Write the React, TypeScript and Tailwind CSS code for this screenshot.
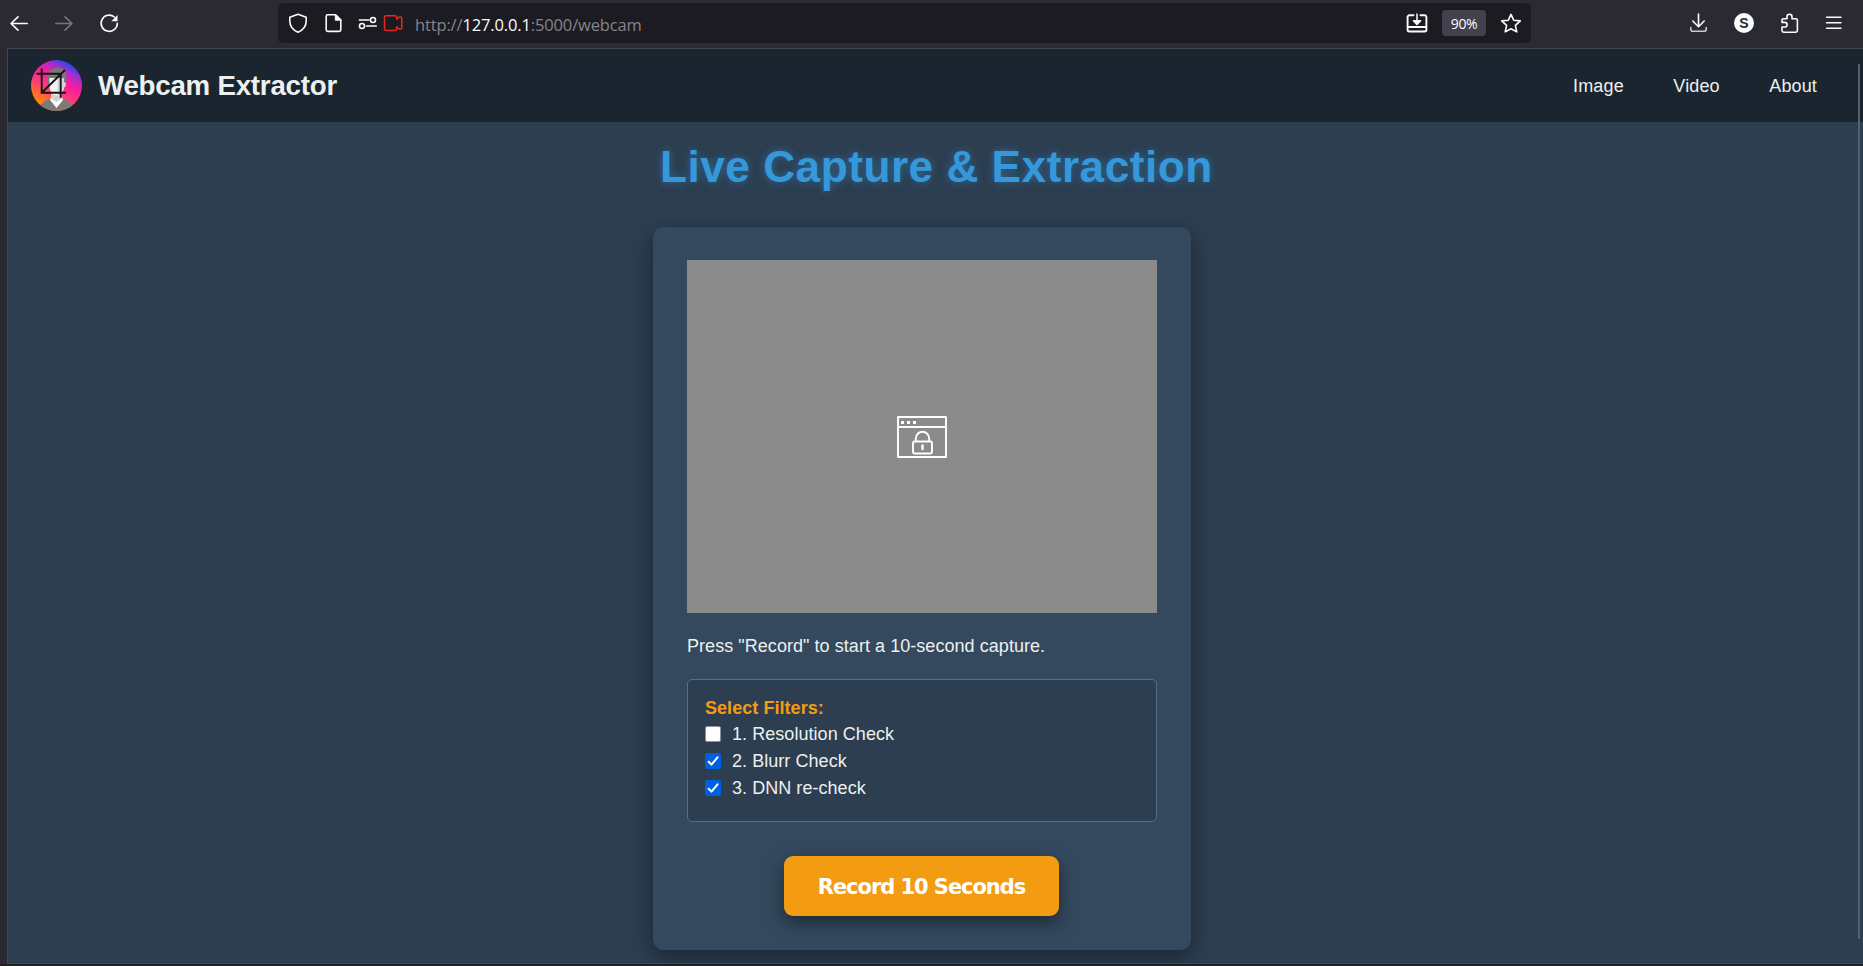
import type { ReactNode } from "react";

type IconProps = { w: number; h?: number; className?: string; children: ReactNode };

function Icon({ w, h = 20, className = "", children }: IconProps) {
  return (
    <svg
      width={w}
      height={h}
      viewBox={`0 0 ${w} ${h}`}
      fill="none"
      stroke="currentColor"
      strokeWidth={1.6}
      strokeLinecap="round"
      strokeLinejoin="round"
      className={`shrink-0 ${className}`}
    >
      {children}
    </svg>
  );
}

function Toolbar() {
  return (
    <div className="flex h-12 shrink-0 items-start bg-[#2b2a33] text-[#fbfbfe]">
      <div className="flex w-[278px] shrink-0 gap-[25px] pt-[13px] pl-[9px]">
        <Icon w={20}>
          <path d="M18.2 10.5H2.2M9 3.8 2 10.5l7 6.7" />
        </Icon>
        <Icon w={20} className="text-[#77767e]">
          <path d="M1.800 10.500h16M11 3.800l7 6.700-7 6.700" />
        </Icon>
        <Icon w={20}>
          <path d="M18.300 10.400A8.100 8.100 0 1 1 15.400 4" />
          <path d="M18.500 2v6.200h-6.200z" fill="currentColor" stroke="none" />
        </Icon>
      </div>

      <div className="mt-[3px] flex h-10 w-[1253px] shrink-0 items-start rounded-[5px] bg-[#1c1b22] pt-[10px] pl-[10px]">
        <Icon w={20} className="mr-[17px]">
          <path d="M10 1.200 18.200 4.300V8c0 5-3 9-8.200 11.200C4.800 17 1.800 13 1.800 8V4.300z" />
        </Icon>
        <Icon w={18} className="mr-[15px]">
          <path d="M10.500 1.800H2.800a1.600 1.600 0 0 0-1.600 1.600v13.400a1.600 1.600 0 0 0 1.600 1.600h11.400a1.600 1.600 0 0 0 1.600-1.600V7z" />
          <path d="M10.300 1.500V7.200h5.700z" fill="currentColor" strokeWidth={1} />
        </Icon>
        <Icon w={20} className="mr-[5px]">
          <path d="M1.500 7H11M8.500 13h9.700" strokeWidth={1.700} />
          <circle cx="15" cy="7" r="2.500" />
          <circle cx="4" cy="13" r="2.500" />
        </Icon>
        <Icon w={20} className="text-[#e22b1c]">
          <path
            d="M2.800 2.800h9.200a1.800 1.800 0 0 1 1.800 1.800v1.600l2.400-2.200h1.300a1.300 1.300 0 0 1 1.300 1.300v9.400a1.300 1.300 0 0 1-1.300 1.300h-1.300l-2.400-2.200v1.800a1.800 1.800 0 0 1-1.800 1.800H2.800a1.300 1.300 0 0 1-1.300-1.300V4.100a1.300 1.300 0 0 1 1.300-1.300Z"
            strokeWidth={1.500}
          />
        </Icon>
        <div className="ml-[12px] w-[991px] shrink-0 font-['Open_Sans','Noto_Sans',sans-serif] text-[16.500px] leading-[24px] tracking-[-0.140px] whitespace-nowrap text-[#85848b]">
          http://<span className="text-[#fbfbfe]">127.0.0.1</span>:5000/webcam
        </div>
        <Icon w={22} className="mr-[14px]">
          <path d="M7.500 2.300H3.300a1.700 1.700 0 0 0-1.700 1.700v12.800a1.700 1.700 0 0 0 1.700 1.700h15.400a1.700 1.700 0 0 0 1.700-1.700V4a1.700 1.700 0 0 0-1.700-1.700h-4.200M2 14h18" strokeWidth={1.900} />
          <path d="M11 1v9M7.400 7.700 11 11.500l3.600-3.800z" fill="currentColor" strokeWidth={1.500} />
        </Icon>
        <div className="mt-[-3px] mr-[14px] flex h-[26px] w-[44px] shrink-0 items-center justify-center rounded-[4px] bg-[#42414d] pt-px font-['Open_Sans','Noto_Sans',sans-serif] text-[14px] tracking-[-0.400px]">
          90%
        </div>
        <Icon w={22}>
          <path d="m11 1.400 2.700 5.800 6.600.700-4.900 4.400 1.400 6.600L11 15.700l-5.800 3.200 1.400-6.600-4.900-4.400 6.600-.7z" />
        </Icon>
      </div>

      <div className="flex pt-[13px] pl-[158px]">
        <Icon w={19} className="mr-[26px]">
          <path d="M9.500 1v12.300M3.800 8l5.700 5.700L15.200 8" />
          <path d="M1.800 14.500v1.800a2 2 0 0 0 2 2h11.400a2 2 0 0 0 2-2v-1.800" className="text-[#c8c8cc]" />
        </Icon>
        <div className="mr-[26px] flex size-5 items-center justify-center rounded-full bg-[#fbfbfe] font-['Liberation_Sans',sans-serif] text-[14px] font-bold text-[#2b2a33]">
          S
        </div>
        <Icon w={20} className="mr-[24px]">
          <path d="M7 5.700V3.800a2.500 2.500 0 0 1 5 0v1.900h3.800a1.600 1.600 0 0 1 1.600 1.600v10.300a1.600 1.600 0 0 1-1.600 1.600H3.600A1.600 1.600 0 0 1 2 17.600V14h2.800a2.300 2.300 0 0 0 0-4.600H2V7.300a1.600 1.600 0 0 1 1.600-1.600z" />
        </Icon>
        <Icon w={20}>
          <path d="M2.500 4.200h14.500M2.500 9.700h14.500M2.500 15.200h14.500" strokeWidth={1.400} />
        </Icon>
      </div>
    </div>
  );
}

function Logo() {
  return (
    <svg width="51" height="51" viewBox="0 0 51 51" className="shrink-0">
      <defs>
        <linearGradient id="ring" x1="0.100" y1="0.900" x2="0.600" y2="0">
          <stop offset="0" stopColor="#ff9500" />
          <stop offset="0.220" stopColor="#ff6a2c" />
          <stop offset="0.420" stopColor="#ff3a7c" />
          <stop offset="0.660" stopColor="#f81e9c" />
          <stop offset="0.860" stopColor="#a62cd0" />
          <stop offset="1" stopColor="#2a48e0" />
        </linearGradient>
        <clipPath id="disc">
          <circle cx="25.500" cy="25.500" r="25.500" />
        </clipPath>
      </defs>
      <g clipPath="url(#disc)">
        <rect width="51" height="51" fill="url(#ring)" />
        <path d="M7 51c2-7 6-11 13-12.500h11C38 40 42 44 44 51z" fill="#7b7b7b" />
        <path d="M20 31h11v8l-5.500 6-5.500-6z" fill="#d0d0d0" />
        <path d="m19.500 38 6 4 6-4 .5 2-6.500 8-6.500-8z" fill="#fff" />
        <path d="M17 17c0-6 4-9.500 10-9.500 6 0 9 4 8.300 9.500L35 25H17z" fill="#777" />
        <path d="M18.500 18h14.500v4c2 0 2 5 0 5.500-.500 5-4 8-7.500 8s-7-4-7-9z" fill="#f2f2f2" />
        <path d="M26.500 18H33v4c2 0 2 5 0 5.500-.500 5-3.500 8-6.500 8z" fill="#d5d5d5" />
      </g>
      <g stroke="#15151a" strokeWidth="1.900" fill="none">
        <path d="M10.700 8.500v24.200h24.300M5.500 13.700h24.200v24M10.700 32.700 34 10" />
      </g>
    </svg>
  );
}

function Header() {
  return (
    <header className="flex h-[73px] shrink-0 items-center bg-[#1a252f] pr-[46px] pl-[23px] text-[#ecf0f1]">
      <Logo />
      <h1 className="ml-4 text-[27.700px] leading-none font-bold tracking-[-0.230px] whitespace-nowrap">Webcam Extractor</h1>
      <nav className="ml-auto flex gap-[49.500px] pt-[2px] text-[18px] tracking-[0.140px]">
        <a>Image</a>
        <a>Video</a>
        <a>About</a>
      </nav>
    </header>
  );
}

function Filter({ label, checked = false }: { label: string; checked?: boolean }) {
  return (
    <label className="flex h-[27px] items-center gap-[11px]">
      <span
        className={`mb-[2px] flex size-4 shrink-0 items-center justify-center rounded-[2px] ${
          checked ? "bg-[#0061e0]" : "border border-[#8f8f9d] bg-white"
        }`}
      >
        {checked && (
          <svg width="16" height="16" viewBox="0 0 16 16" fill="none" stroke="#fff" strokeWidth="2" strokeLinecap="round" strokeLinejoin="round">
            <path d="m3.700 8.700 2.800 2.900 6-7.300" />
          </svg>
        )}
      </span>
      <span>{label}</span>
    </label>
  );
}

function Preview() {
  return (
    <div className="flex h-[353px] items-center justify-center bg-[#8b8b8c]">
      <svg width="50" height="42" viewBox="0 0 50 42" fill="none" stroke="#fff" strokeWidth="1.900">
        <path d="M1 1h48v40H1zM1 11h48" strokeLinejoin="round" />
        <path d="M4 5h3v3H4zM10 5h3v3h-3zM16 5h3v3h-3z" fill="#fff" stroke="none" />
        <rect x="16" y="25.500" width="19" height="12" rx="1.500" />
        <path d="M18.800 25.500v-3a6.700 6.700 0 0 1 13.400 0v3" />
        <path d="M25.500 29.500v3.500" strokeWidth="2.500" strokeLinecap="round" />
      </svg>
    </div>
  );
}

export default function App() {
  return (
    <div className="flex h-[966px] w-[1863px] flex-col overflow-hidden bg-[#211f22] font-['Liberation_Sans',Arial,sans-serif]">
      <Toolbar />
      <div className="flex h-[916px] shrink-0 bg-[#2b2a33]">
        <div className="w-[7px] shrink-0" />
        <div className="relative flex flex-1 flex-col overflow-hidden border-t border-b border-l border-[#47454c] bg-[#2c3e50]">
          <Header />
          <h2 className="mt-[19px] pl-[652px] text-[44.200px] leading-[52px] font-bold tracking-[0.500px] whitespace-nowrap text-[#3498db] [text-shadow:0_0_8px_rgba(52,152,219,0.500)]">
            Live Capture &amp; Extraction
          </h2>
          <main className="mt-[34px] ml-[645px] flex h-[723px] w-[538px] shrink-0 flex-col rounded-[11px] bg-[#34495e] px-[34px] pt-[33px] text-[18px] tracking-[0.050px] text-[#ecf0f1] shadow-[0_7px_22px_rgba(0,0,0,0.400)]">
            <Preview />
            <p className="mt-[20px] leading-[26px]">Press "Record" to start a 10-second capture.</p>
            <section className="mt-[20px] h-[143px] rounded-[5px] border border-[#5d6d7e] bg-[#2c3e50] px-[17px] pt-[15px]">
              <h3 className="h-[26px] leading-[26px] font-bold text-[#f39c12]">Select Filters:</h3>
              <Filter label="1. Resolution Check" />
              <Filter label="2. Blurr Check" checked />
              <Filter label="3. DNN re-check" checked />
            </section>
            <button className="mt-[34px] ml-[97px] h-[60px] w-[275px] shrink-0 rounded-[9px] bg-[#f39c12] pt-[3px] font-['DejaVu_Sans',sans-serif] text-[21px] font-bold tracking-[-1.050px] text-white shadow-[0_7px_18px_rgba(0,0,0,0.450)]">
              Record 10 Seconds
            </button>
          </main>
          <div className="absolute top-[15px] right-[3px] h-[875px] w-[2px] bg-[#56616c]" />
        </div>
      </div>
    </div>
  );
}
